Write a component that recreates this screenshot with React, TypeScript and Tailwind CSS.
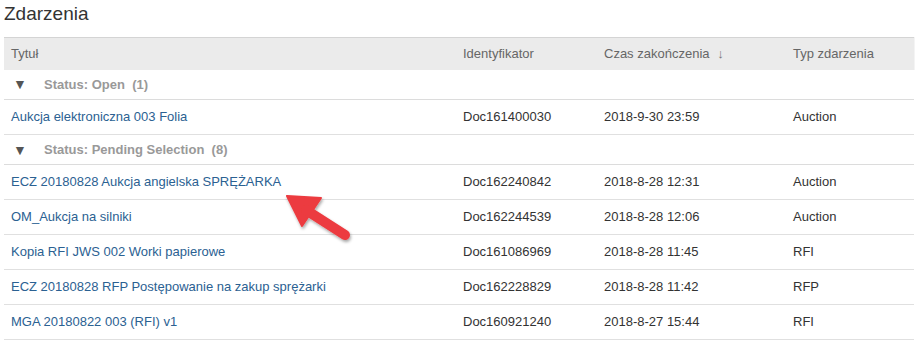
import React from 'react';

type Row = { title: string; id: string; end: string; type: string };

const groups: { label: string; count: number; rows: Row[] }[] = [
    {
        label: 'Status: Open',
        count: 1,
        rows: [{ title: 'Aukcja elektroniczna 003 Folia', id: 'Doc161400030', end: '2018-9-30 23:59', type: 'Auction' }],
    },
    {
        label: 'Status: Pending Selection',
        count: 8,
        rows: [
            { title: 'ECZ 20180828 Aukcja angielska SPRĘŻARKA', id: 'Doc162240842', end: '2018-8-28 12:31', type: 'Auction' },
            { title: 'OM_Aukcja na silniki', id: 'Doc162244539', end: '2018-8-28 12:06', type: 'Auction' },
            { title: 'Kopia RFI JWS 002 Worki papierowe', id: 'Doc161086969', end: '2018-8-28 11:45', type: 'RFI' },
            { title: 'ECZ 20180828 RFP Postępowanie na zakup sprężarki', id: 'Doc162228829', end: '2018-8-28 11:42', type: 'RFP' },
            { title: 'MGA 20180822 003 (RFI) v1', id: 'Doc160921240', end: '2018-8-27 15:44', type: 'RFI' },
        ],
    },
];

const App: React.FC = () => {
    return (
        <div className="relative w-[919px] h-[345px] bg-white overflow-hidden text-[13px] text-[#333]" style={{ fontFamily: '"Liberation Sans", Arial, sans-serif' }}>
            <h1 className="pl-[4px] pt-[3px] h-[37px] text-[19px] leading-[22px] text-[#333]">Zdarzenia</h1>
            <table className="ml-[4px] w-[910px] border-collapse table-fixed">
                <colgroup>
                    <col className="w-[452px]" />
                    <col className="w-[141px]" />
                    <col className="w-[189px]" />
                    <col className="w-[128px]" />
                </colgroup>
                <thead>
                    <tr className="h-[32px] bg-[#ebebeb] border-t border-[#d4d4d4] text-[#666] text-left">
                        <th className="font-normal pl-[7px]">Tytuł</th>
                        <th className="font-normal pl-[7px]">Identyfikator</th>
                        <th className="font-normal pl-[7px]">
                            Czas zakończenia <span className="ml-[4px] font-bold text-[#777]">↓</span>
                        </th>
                        <th className="font-normal pl-[7px] border-r border-[#f4f4f4]">Typ zdarzenia</th>
                    </tr>
                </thead>
                <tbody>
                    {groups.map((g) => (
                        <React.Fragment key={g.label}>
                            <tr className="h-[30px] border-b border-[#dcdcdc]">
                                <td colSpan={4} className="pl-[9px]">
                                    <div className="flex items-center">
                                        <span className="w-[31px] shrink-0 text-[#555] text-[14px] leading-none">▼</span>
                                        <span className="font-bold text-[#999]">
                                            {g.label}&nbsp;&nbsp;({g.count})
                                        </span>
                                    </div>
                                </td>
                            </tr>
                            {g.rows.map((r) => (
                                <tr key={r.id} className="h-[35px] border-b border-[#e0e0e0]">
                                    <td className="pl-[7px] text-[#2b6192]">{r.title}</td>
                                    <td className="pl-[7px]">{r.id}</td>
                                    <td className="pl-[7px]">{r.end}</td>
                                    <td className="pl-[7px]">{r.type}</td>
                                </tr>
                            ))}
                        </React.Fragment>
                    ))}
                </tbody>
            </table>
            <svg className="absolute left-[280px] top-[188px]" width="80" height="60" viewBox="0 0 80 60">
                <defs>
                    <filter id="sh" x="-30%" y="-30%" width="160%" height="160%">
                        <feDropShadow dx="1" dy="2" stdDeviation="1.5" floodColor="#000" floodOpacity="0.35" />
                    </filter>
                </defs>
                <g filter="url(#sh)">
                    <path d="M7 8 L41 10 L22 38 Z" fill="#ec3b3f" stroke="#ec3b3f" strokeWidth="2" strokeLinejoin="round" />
                    <line x1="26" y1="22" x2="65" y2="47" stroke="#ec3b3f" strokeWidth="10" strokeLinecap="round" />
                </g>
            </svg>
        </div>
    );
};

export default App;
